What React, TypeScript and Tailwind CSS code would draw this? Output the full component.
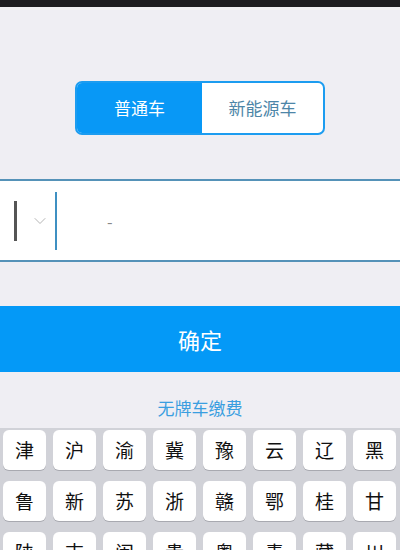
import { ChevronDown } from "lucide-react";

const ROWS = [
  ["津", "沪", "渝", "冀", "豫", "云", "辽", "黑"],
  ["鲁", "新", "苏", "浙", "赣", "鄂", "桂", "甘"],
  ["陕", "吉", "闽", "贵", "粤", "青", "藏", "川"],
];

export default function App() {
  return (
    <div
      className="w-[400px] h-[550px] overflow-hidden bg-[#efeef3] flex flex-col"
      style={{ fontFamily: '"Noto Sans CJK SC", "Noto Sans", sans-serif' }}
    >
      {/* status strip */}
      <div className="h-[7px] bg-[#1c1b20] shrink-0" />

      {/* vehicle type toggle */}
      <div className="flex justify-center pt-[74px] shrink-0">
        <div className="flex w-[250px] h-[54px] rounded-[7px] border-2 border-[#1c9cf0] overflow-hidden bg-white">
          <div className="w-[125px] flex items-center justify-center bg-[#0898f6] text-white text-[17px]">
            普通车
          </div>
          <div className="flex-1 flex items-center justify-center text-[#4d86a8] text-[17px]">
            新能源车
          </div>
        </div>
      </div>

      {/* plate input */}
      <div className="shrink-0 mt-[44px] h-[83px] bg-white border-y-2 border-[#5592b8] flex items-center">
        <div className="ml-[14px] w-[3px] h-[40px] bg-[#555]" />
        <ChevronDown size={20} strokeWidth={1.2} className="ml-[13px] text-[#b5b5b5]" />
        <div className="ml-[5px] w-[2px] h-[58px] bg-[#3f90c2]" />
        <span className="ml-[50px] text-[#888] text-[16px] leading-none">-</span>
      </div>

      {/* confirm */}
      <div className="shrink-0 mt-[44px] h-[66px] bg-[#0499f7] flex items-center justify-center text-white text-[22px]">
        确定
      </div>

      <div className="shrink-0 h-[56px] flex items-end justify-center pb-[8px] text-[#3a9ee0] text-[17px]">
        无牌车缴费
      </div>

      {/* province keyboard */}
      <div className="shrink-0 h-[200px] bg-[#d1d2d8] px-[3px] pt-[2px] flex flex-col gap-[11px]">
        {ROWS.map((row, i) => (
          <div key={i} className="flex gap-[7px]">
            {row.map(k => (
              <div
                key={k}
                className="w-[43px] h-[40px] rounded-[6px] bg-white shadow-[0_1px_0_#a8a9b0] flex items-center justify-center text-[19px] text-[#111]"
              >
                {k}
              </div>
            ))}
          </div>
        ))}
      </div>
    </div>
  );
}
